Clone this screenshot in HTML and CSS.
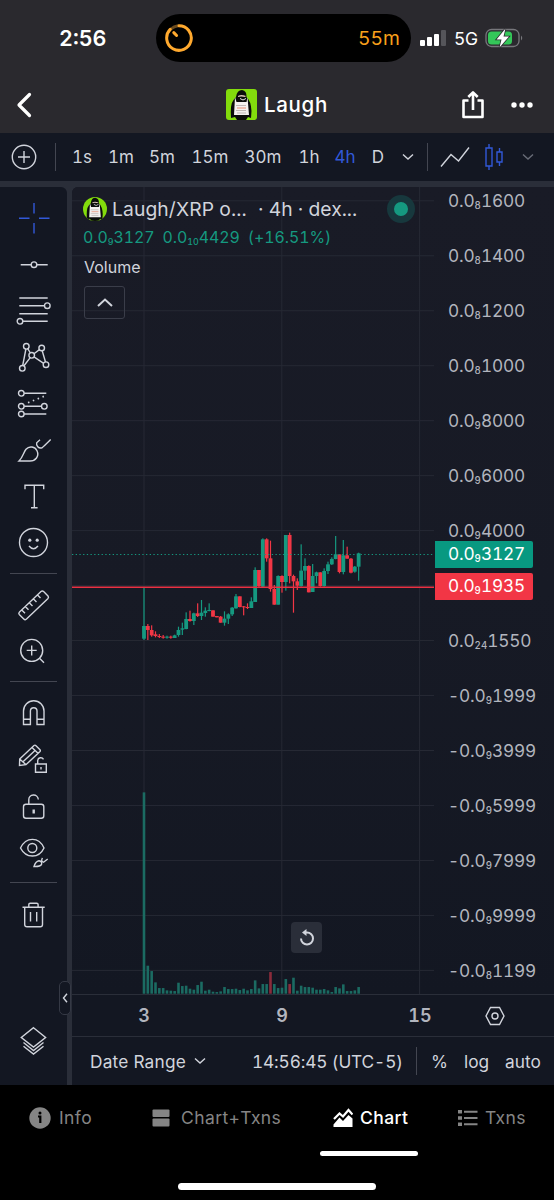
FILE: index.html
```html
<!DOCTYPE html>
<html lang="en">
<head>
  <meta charset="UTF-8" />
  <meta name="viewport" content="width=device-width, initial-scale=1.0"/>
  <title>Laugh</title>
  <link rel="stylesheet" href="styles.css">
</head>
<body>

  <svg class="defs" width="0" height="0">
    <symbol id="monkey" viewBox="0 0 31 31">
      <rect width="31" height="31" fill="#83dc0c"/>
      <path d="M10 8 Q11 1 16 1 Q21 2 20.5 8 Q25 12 25.5 22 L25 29 L22 28 L20 31 H11 L9 28 L5 29 Q4 15 7.500 11 Z" fill="#0b0d0b"/>
      <path d="M12 7 Q15 5 20 7 L19 8 Q15 7 12 8 Z" fill="#d9c1b4"/>
      <path d="M9 8 L10.500 13 H20.500 L21.500 8 L23 26 H8 Z" fill="#f4f1ef"/>
      <path d="M11 8.500 Q15 7.500 20 8.500 L19 13 H12 Z" fill="#0b0d0b"/>
      <path d="M14 9.500 L17 11 L20 9.500" stroke="#e8e8e8" fill="none"/>
      <path d="M10 16.500 H20 M10 21.500 H20 M11 24 H20" stroke="#b3aaa8" stroke-width=".8"/>
      <path d="M11 19 H20" stroke="#e58c72" stroke-width="1"/>
    </symbol>
  </svg>

  <div class="status-bar">
    <div class="time">2:56</div>
    <div class="island">
      <svg width="28" height="30" viewBox="0 0 28 30" fill="none" stroke="#ffa92e" stroke-width="3" stroke-linecap="round">
        <path d="M6 6 A12.300 12.300 0 0 1 13 2.700" stroke="#6b4a1c"/>
        <path d="M14 2.700 A12.300 12.300 0 1 1 5.200 6.400"/>
        <path d="M8.800 9.600 L11.600 12.500"/>
      </svg>
      <span>55m</span>
    </div>
    <svg class="signal" width="27" height="18" viewBox="0 0 27 18" fill="#fff">
      <rect x="0" y="11" width="5" height="6" rx="1"/>
      <rect x="7" y="8" width="5" height="9" rx="1"/>
      <rect x="14" y="5" width="5" height="12" rx="1"/>
      <rect x="21" y="1" width="5" height="16" rx="1" fill="#55555a"/>
    </svg>
    <span class="network">5G</span>
    <svg class="battery" width="40" height="22" viewBox="0 0 40 22">
      <rect x="1" y="2.500" width="33" height="17" rx="5.500" fill="none" stroke="#77777c" stroke-width="1.300"/>
      <rect x="3" y="4.500" width="24" height="13" rx="3.500" fill="#34c759"/>
      <path d="M36 8.500 Q38.500 11 36 13.500 Z" fill="#77777c"/>
      <path d="M20.500 1.500 L11.500 12.500 H16.500 L14.500 20.500 L24 9.500 H18.500 Z" fill="#fff" stroke="#2a292e" stroke-width="1.600" paint-order="stroke"/>
    </svg>
  </div>

  <div class="nav-bar">
    <svg class="back" width="18" height="28" viewBox="0 0 18 28" fill="none" stroke="#fff" stroke-width="3.200" stroke-linecap="round" stroke-linejoin="round"><path d="M14.500 3.500 L4 14 L14.500 24.500"/></svg>
    <div class="coin">
      <svg class="logo" width="31" height="31"><use href="#monkey"/></svg>
      <h1>Laugh</h1>
    </div>
    <div class="actions">
      <svg width="24" height="30" viewBox="0 0 24 30" fill="none" stroke="#fff" stroke-width="2.600" stroke-linejoin="round">
        <path d="M7.500 10.500 H2.500 V27 H21.500 V10.500 H16.500"/>
        <path d="M12 20 V3 M7.300 7 L12 2.300 L16.700 7"/>
      </svg>
      <svg width="22" height="8" viewBox="0 0 22 8" fill="#fff"><circle cx="3" cy="4" r="2.700"/><circle cx="11" cy="4" r="2.700"/><circle cx="19" cy="4" r="2.700"/></svg>
    </div>
  </div>

  <div class="toolbar">
    <svg width="26" height="26" viewBox="0 0 26 26" class="line-icon"><circle cx="13" cy="13" r="11.700"/><path d="M7 13 H19 M13 7 V19"/></svg>
    <i class="divider"></i>
    <span>1s</span>
    <span>1m</span>
    <span>5m</span>
    <span>15m</span>
    <span>30m</span>
    <span>1h</span>
    <span class="active">4h</span>
    <span>D</span>
    <svg width="12" height="8" viewBox="0 0 12 8" class="line-icon"><path d="M1 1.500 L6 6 L11 1.500"/></svg>
    <i class="divider"></i>
    <svg width="30" height="22" viewBox="0 0 30 22" class="line-icon"><path d="M1 20.500 L11 8.500 L18.500 15 L29 1.500"/></svg>
    <svg width="20" height="28" viewBox="0 0 20 28" class="line-icon blue"><path d="M2 5 H8 V23 H2 Z M5 1 V5 M5 23 V27 M13 9 H18 V19 H13 Z M15.500 5 V9 M15.500 19 V23"/></svg>
    <svg width="12" height="8" viewBox="0 0 12 8" class="line-icon dim"><path d="M1 1.500 L6 6 L11 1.500"/></svg>
  </div>

  <div class="workspace">
    <div class="tools">
      <svg class="line-icon blue" viewBox="0 0 40 40"><path d="M20 5 V15.500 M20 25 V35.500 M5 20.300 H15.500 M25 20.300 H35.500"/></svg>
      <svg class="line-icon" viewBox="0 0 40 40"><circle cx="20" cy="19.700" r="2.800"/><path d="M6.700 19.700 H17.200 M22.800 19.700 H33.700"/></svg>
      <svg class="line-icon" viewBox="0 0 40 40"><path d="M5.300 7 H33.700 M5.300 14.700 H30.500 M5.300 22.700 H33.700 M8.800 30.300 H33.700"/><circle cx="33.300" cy="14.700" r="2.800"/><circle cx="6" cy="30.300" r="2.800"/></svg>
      <svg class="line-icon" viewBox="0 0 40 40"><path d="M11.900 11 L8.700 27.500 M13.700 10.700 L16.400 15 M16.200 19.600 L9.800 28 M20 15.700 L25.400 11.600 M28.200 12.800 L31.500 24 M20 18.800 L29.700 25.300"/><circle cx="12.300" cy="8.300" r="2.800"/><circle cx="27.700" cy="10" r="2.800"/><circle cx="17.700" cy="17.300" r="2.800"/><circle cx="32" cy="26.700" r="2.800"/><circle cx="8.300" cy="30.300" r="2.800"/></svg>
      <svg class="line-icon" viewBox="0 0 40 40"><circle cx="7.300" cy="9.300" r="2.800"/><circle cx="7.300" cy="22.300" r="2.800"/><circle cx="7.300" cy="30" r="2.800"/><circle cx="30.300" cy="22.300" r="2.800"/><path d="M10.100 9.300 H32.300 M10.100 22.300 H27.500 M10.100 30 H32.300"/><path d="M14 18.700 L30 12.300" stroke-dasharray="1.500 3.700" stroke-width="1.700"/></svg>
      <svg class="line-icon" viewBox="0 0 40 40"><path d="M5 30 C9 26.300 9.500 21.300 12 18.300 C15.500 14.300 21 15.800 23 19.800 C25.500 25.300 21.500 30 16 30 Z M26 8.800 L22.700 11.800 C22 14.300 24.500 18 28 16.800 Q29 16.300 36.700 8.600"/></svg>
      <svg class="line-icon" viewBox="0 0 40 40"><path d="M11 12.300 V8.300 H29.700 V12.300 M20.300 8.300 V30.700 M17 30.700 H23.600"/></svg>
      <svg class="line-icon" viewBox="0 0 40 40"><circle cx="19.500" cy="18.500" r="14"/><path d="M15 22 Q19.500 27.500 24 22"/><g fill="#d1d4dc" stroke="none"><circle cx="15.800" cy="16.200" r="1.600"/><circle cx="23.200" cy="16.200" r="1.600"/></g></svg>
      <hr>
      <svg class="line-icon" viewBox="0 0 40 40"><path d="M27 6.500 Q28.300 5.300 29.600 6.500 L34 11 Q35 12.200 34 13.400 L12.500 34 Q11 35.300 9.800 34 L5.300 29.500 Q4.200 28.200 5.500 27 Z M23.500 10 L26.500 13 M19.500 14 L22.500 17 M15.500 18 L18.500 21 M11.500 21.700 L14.500 24.700 M8 25.200 L11 28.200"/></svg>
      <svg class="line-icon" viewBox="0 0 40 40"><circle cx="17.700" cy="18.400" r="11"/><path d="M25.500 26.200 L30 30.700 M12.700 18.400 H22.700 M17.700 13.400 V23.400"/></svg>
      <hr>
      <svg class="line-icon" viewBox="0 0 40 40"><path d="M9.500 31.500 V18 A10.200 10.200 0 0 1 30 18 V31.500 H23 V18 A3.300 3.300 0 0 0 16.400 18 V31.500 Z M9.500 26.300 H16.400 M23 26.300 H30"/></svg>
      <svg class="line-icon" viewBox="0 0 40 40"><path d="M5.700 19 L20 5.500 Q21 4.700 22 5.700 L26 9.700 Q26.700 10.600 26 11.500 L12 24.700 L5.500 25.400 Z M5.700 19 L12 24.700 M18 7.500 L24 13.300 M9 21.800 L21 10.500"/><path d="M21.500 24 H32.300 V32.300 H21.500 Z M23.700 24 V20.500 A3.100 3.100 0 0 1 29.500 19.300 M27 27 V29.500"/></svg>
      <svg class="line-icon" viewBox="0 0 40 40"><rect x="9.500" y="18.300" width="20.300" height="14" rx="2.500"/><path d="M14.800 18.300 V14 A4.700 4.700 0 0 1 24.300 13.500"/><path d="M19.700 23.500 V27.500" stroke-width="2.400"/></svg>
      <svg class="line-icon" viewBox="0 0 40 40"><path d="M6.500 15 C12 3.500 25 3.500 30 15 C25 25.700 12 25.700 6.500 15 Z"/><circle cx="18.300" cy="15" r="4.500"/><path d="M20 33.500 Q21.500 28.500 25 27.800 Q28.500 28.500 27.500 31.500 Q26 33.800 20 33.500 Z M28.500 25 Q26.500 28 29.500 29.200 L33.700 26"/></svg>
      <hr>
      <svg class="line-icon" viewBox="0 0 40 40"><path d="M8.500 13.200 H30.700 M14.800 13 V10.500 Q14.800 9.200 16.200 9.200 H22.700 Q24.100 9.200 24.100 10.500 V13 M10.700 13.200 V30.500 Q10.700 32.700 13 32.700 H26.300 Q28.500 32.700 28.500 30.500 V13.200 M16.500 18 V27.500 M22.700 18 V27.500"/></svg>
      <svg class="line-icon layers" viewBox="0 0 40 40"><path d="M19.500 6.700 L31.600 16.500 L19.500 26 L7.300 16.500 Z M9.500 21.500 L19.500 29.500 L29.500 21.500 M9.500 25.200 L19.500 33 L29.500 25.200"/></svg>
      <div class="collapse"><svg width="6" height="10" viewBox="0 0 6 10" class="line-icon"><path d="M5 .7 L1.500 5 L5 9.300"/></svg></div>
    </div>

    <div class="chart-area">
      <div class="chart">
        <div class="pane">
          <svg id="plot" width="362" height="807" viewBox="72 187 362 807"></svg>
          <div class="legend">
            <div class="symbol">
              <svg class="avatar" width="24" height="24"><use href="#monkey"/></svg>
              <span class="pair">Laugh/XRP o...</span>
              <span class="source">· 4h · dex...</span>
              <i class="live"></i>
            </div>
            <div class="quote"><span>0.0<sub>9</sub>3127</span><span>0.0<sub>10</sub>4429</span><span>(+16.51%)</span></div>
            <div class="study">Volume</div>
            <div class="fold"><svg width="18" height="11" viewBox="0 0 18 11" class="line-icon bold"><path d="M2 9 L9 2.500 L16 9"/></svg></div>
          </div>
          <div class="reset">
            <svg width="18" height="18" viewBox="0 0 18 18" fill="none" stroke="#d1d4dc" stroke-width="2"><path d="M3 9.500 A6 6 0 1 0 9 3.500 H6.500"/><path d="M8.500 0 V7 L4 3.500 Z" fill="#d1d4dc" stroke="none"/></svg>
          </div>
        </div>
        <div class="price-axis">
          <span>0.0<sub>8</sub>1600</span>
          <span>0.0<sub>8</sub>1400</span>
          <span>0.0<sub>8</sub>1200</span>
          <span>0.0<sub>8</sub>1000</span>
          <span>0.0<sub>9</sub>8000</span>
          <span>0.0<sub>9</sub>6000</span>
          <span>0.0<sub>9</sub>4000</span>
          <span></span>
          <span>0.0<sub>24</sub>1550</span>
          <span>-0.0<sub>9</sub>1999</span>
          <span>-0.0<sub>9</sub>3999</span>
          <span>-0.0<sub>9</sub>5999</span>
          <span>-0.0<sub>9</sub>7999</span>
          <span>-0.0<sub>9</sub>9999</span>
          <span>-0.0<sub>8</sub>1199</span>
          <b class="tag up">0.0<sub>9</sub>3127</b>
          <b class="tag down">0.0<sub>9</sub>1935</b>
        </div>
      </div>
      <div class="time-axis">
        <span>3</span><span>9</span><span>15</span>
        <svg width="20" height="20" viewBox="0 0 20 20" class="line-icon"><path d="M5.500 1.500 H14.500 L19 10 L14.500 18.500 H5.500 L1 10 Z"/><circle cx="10" cy="10" r="3"/></svg>
      </div>
      <div class="range-bar">
        <span class="range">Date Range</span>
        <svg width="12" height="8" viewBox="0 0 12 8" class="line-icon"><path d="M1 1.500 L6 6 L11 1.500"/></svg>
        <span class="clock">14:56:45 (UTC-5)</span>
        <i class="divider"></i>
        <span class="pct">%</span>
        <span class="log">log</span>
        <span class="auto">auto</span>
      </div>
    </div>
  </div>

  <div class="tabs">
    <div class="tab info">
      <svg width="22" height="22" viewBox="0 0 22 22"><circle cx="11" cy="11" r="10.700" fill="#858585"/><path d="M9 9.500 H11.300 V16" stroke="#000" stroke-width="2.200" fill="none"/><circle cx="11" cy="6" r="1.500"/></svg>
      <span>Info</span>
    </div>
    <div class="tab both">
      <svg width="18" height="18" viewBox="0 0 18 18" fill="#858585"><rect x=".5" y=".5" width="17" height="7.500" rx="1"/><rect x=".5" y="9.500" width="17" height="8" rx="1"/></svg>
      <span>Chart+Txns</span>
    </div>
    <div class="tab chart-tab active">
      <svg width="20" height="20" viewBox="0 0 20 20"><path d="M1 11 L6.500 5.500 L10 8.500 L15.500 2 L19.500 6.500" stroke="#fff" stroke-width="2.200" fill="none"/><path d="M.5 19 V16.500 L6.500 9.500 L10 13 L15.500 7 L19.500 10.500 V19 Z" fill="#fff"/></svg>
      <span>Chart</span>
    </div>
    <div class="tab txns">
      <svg width="20" height="18" viewBox="0 0 20 18" fill="#858585"><path d="M0 1 H4 V4.500 H0 Z M0 7.200 H4 V10.700 H0 Z M0 13.400 H4 V17 H0 Z M6 1.700 H19.500 V3.700 H6 Z M6 8 H19.500 V10 H6 Z M6 14.200 H19.500 V16.200 H6 Z"/></svg>
      <span>Txns</span>
    </div>
    <div class="home-bar"></div>
  </div>

  <script src="chart.js"></script>
</body>
</html>
```
FILE: chart.js
```js
const svg = document.getElementById("plot");
const STEP = 3.833;
const X0 = 144;

function add(tag, attrs) {
  const el = document.createElementNS("http://www.w3.org/2000/svg", tag);
  for (const k in attrs) el.setAttribute(k, attrs[k]);
  svg.appendChild(el);
}

// Grid
[144, 281.8, 419.6].forEach(x => add("line", { x1: x, x2: x, y1: 187, y2: 994, class: "grid" }));
for (let i = 0; i < 15; i++) {
  const y = 200.8 + i * 54.97;
  add("line", { x1: 72, x2: 434, y1: y, y2: y, class: "grid" });
}

// Volume: height in thirds of a pixel
const volume = [604, 84, 68, 34, 17, 17, 10, 9, 8, 33, 23, 24, 15, 12, 26, 36, 9, 12, 6, 5, 7, 20, 14, 14, 15, 11, 15, 10, 14,
  40, 16, 29, 29, 65, 29, 17, 18, 44, 29, 48, 9, 24, 20, 20, 18, 12, 12, 14, 10, 5, 20, 16, 28, 8, 8, 10, 20];
volume.forEach((v, i) => {
  const red = i === 33 || i === 38;
  add("rect", { x: X0 + i * STEP - 1.3, y: 993.7 - v / 3, width: 2.6, height: v / 3, class: red ? "vol-down" : "vol-up" });
});

// Candles: [up, body top, body bottom, wick top, wick bottom]
const candles = [
  [1, 318, 356, 203, 360], [0, 318, 330, 312, 360], [0, 330, 346, 316, 350], [0, 343, 348, 334, 352],
  [0, 348, 351, 342, 354], [0, 350, 353, 345, 356], [1, 350, 353, 347, 356], [0, 350, 353, 347, 356],
  [1, 346, 354, 344, 354], [1, 330, 345, 320, 350], [1, 325, 329, 308, 345], [1, 297, 327, 277, 328],
  [0, 297, 303, 272, 305], [1, 280, 303, 278, 315], [0, 280, 288, 250, 291], [1, 278, 288, 240, 300],
  [1, 272, 279, 262, 290], [1, 270, 273, 250, 274], [0, 271, 290, 271, 290], [0, 288, 292, 288, 292],
  [0, 290, 308, 288, 308], [1, 296, 308, 274, 317], [1, 283, 296, 280, 312], [1, 263, 283, 261, 288],
  [1, 229, 265, 222, 266], [0, 229, 261, 229, 262], [0, 259, 262, 258, 286], [0, 261, 264, 250, 267],
  [1, 244, 264, 232, 264], [1, 150, 246, 142, 246], [0, 150, 198, 150, 203], [1, 58, 200, 55, 202],
  [0, 58, 115, 55, 125], [0, 115, 207, 62, 215], [0, 207, 254, 195, 254], [1, 168, 254, 166, 254],
  [0, 168, 186, 166, 218], [1, 45, 186, 45, 212], [0, 45, 168, 38, 190], [0, 168, 184, 164, 278],
  [0, 184, 197, 175, 210], [1, 152, 198, 73, 200], [1, 138, 152, 115, 180], [0, 138, 217, 136, 217],
  [1, 168, 216, 132, 216], [1, 157, 168, 155, 190], [0, 157, 198, 157, 200], [1, 153, 198, 145, 200],
  [1, 133, 153, 125, 162], [1, 117, 133, 112, 135], [1, 103, 117, 48, 118], [0, 103, 156, 103, 160],
  [1, 106, 156, 60, 163], [0, 106, 116, 80, 116], [0, 116, 158, 114, 160], [1, 140, 155, 138, 158],
  [1, 100, 140, 98, 182]
];
candles.forEach(([up, top, bottom, high, low], i) => {
  const x = X0 + i * STEP;
  const cls = up ? "up" : "down";
  add("rect", { x: x - 0.6, y: 520 + high / 3, width: 1.2, height: (low - high) / 3, class: cls });
  add("rect", { x: x - 1.9, y: 520 + top / 3, width: 3.8, height: (bottom - top) / 3, class: cls });
});

// Price lines
add("line", { x1: 72, x2: 434, y1: 554.5, y2: 554.5, class: "last-price" });
add("line", { x1: 72, x2: 434, y1: 587.3, y2: 587.3, class: "alert-price" });
```
FILE: styles.css
```css
* {
  margin: 0;
  padding: 0;
  box-sizing: border-box;
}

body {
  width: 554px;
  height: 1200px;
  overflow: hidden;
  background: #000;
  color: #d1d4dc;
  font-family: Inter, 'Liberation Sans', sans-serif;
  font-variant-numeric: tabular-nums;
}

.defs {
  display: block;
}

svg {
  display: block;
  flex: none;
}

sub {
  position: relative;
  top: 2px;
  font-size: 0.56em;
  font-weight: 500;
  line-height: 0;
  letter-spacing: 0;
  vertical-align: baseline;
}

.line-icon {
  fill: none;
  stroke: #d1d4dc;
  stroke-width: 1.4;
  overflow: visible;
}

.line-icon.blue { stroke: #3259d8; }
.line-icon.dim { stroke: #686c77; }
.line-icon.bold { stroke-width: 2; }

.divider {
  width: 1px;
  height: 28px;
  background: #434651;
}

/* Status bar */
.status-bar {
  display: flex;
  align-items: center;
  height: 76px;
  background: #2a292e;
  color: #fff;
}

.time {
  width: 156px;
  padding-left: 59px;
  font-size: 21.5px;
  font-weight: 600;
}

.island {
  display: flex;
  align-items: center;
  justify-content: space-between;
  width: 255px;
  height: 48px;
  padding: 0 11px 0 9px;
  border-radius: 24px;
  background: #000;
  color: #f9a01b;
  font-size: 19.3px;
}

.signal { margin-left: 9px; }

.network {
  width: 31px;
  padding-left: 7px;
  font-size: 17.5px;
  letter-spacing: -0.4px;
}

.battery { margin-left: 7px; }

/* Navigation */
.nav-bar {
  display: flex;
  align-items: center;
  justify-content: space-between;
  height: 57px;
  padding: 0 21px 0 15px;
  background: #2a292e;
  color: #fff;
}

.back { margin-right: 60px; }

.coin {
  display: flex;
  align-items: center;
  gap: 7px;
}

.logo { border-radius: 3px; }

.coin h1 {
  font-size: 20.5px;
  font-weight: 500;
  letter-spacing: 0.7px;
}

.actions {
  display: flex;
  align-items: center;
  gap: 26px;
}

/* Interval toolbar */
.toolbar {
  display: grid;
  grid-template-columns: 48px 14px 40px 38px 44px 52px 54px 38px 34px 32px 28px 10px 46px 32px 36px;
  align-items: center;
  justify-items: center;
  height: 48px;
  background: #131722;
  font-size: 17px;
}

.toolbar .active { color: #3259d8; }

/* Drawing tools */
.workspace {
  display: flex;
  height: 904px;
  border-top: 6px solid #2a2e39;
  background: #2a2e39;
}

.tools {
  position: relative;
  display: flex;
  flex-direction: column;
  align-items: center;
  width: 67px;
  padding-top: 11px;
  border-top-right-radius: 6px;
  background: #131722;
}

.tools > svg {
  width: 40px;
  height: 40px;
  margin-bottom: 6.5px;
}

.tools hr {
  width: 47px;
  height: 1px;
  margin: 3px 0 11px;
  border: none;
  background: #434651;
}

.tools .layers { margin-top: 80px; }

.collapse {
  position: absolute;
  left: 59px;
  top: 794px;
  display: flex;
  align-items: center;
  justify-content: center;
  width: 12px;
  height: 34px;
  border: 1px solid #353945;
  border-radius: 5px;
  background: #131722;
}

/* Chart */
.chart-area {
  width: 482px;
  margin-left: 5px;
  border-top-left-radius: 6px;
  background: #131722;
  overflow: hidden;
}

.chart {
  display: flex;
  height: 807px;
  background: linear-gradient(#191b26, #171a25 50%, #131722);
}

.pane {
  position: relative;
  width: 362px;
}

.grid { stroke: #262934; stroke-width: 1; }
.up { fill: #159980; }
.down { fill: #f23645; }
.vol-up { fill: #1b6b62; }
.vol-down { fill: #8b2c3b; }
.last-price { stroke: #159980; stroke-width: 1.2; stroke-dasharray: 1.3 2.4; }
.alert-price { stroke: #e93142; stroke-width: 1.4; }

.legend {
  position: absolute;
  top: 7px;
  left: 11px;
  width: 336px;
}

.symbol {
  display: flex;
  align-items: center;
  height: 30px;
  font-size: 19.3px;
}

.avatar { border-radius: 50%; }

.pair {
  width: 146px;
  margin-left: 5px;
  letter-spacing: 0.1px;
  white-space: nowrap;
}

.source { white-space: nowrap; }

.live {
  width: 28px;
  height: 28px;
  margin-left: auto;
  margin-right: 4px;
  border: 7.5px solid #17383d;
  border-radius: 50%;
  background: #159980;
}

.quote {
  display: flex;
  gap: 8px;
  height: 27px;
  align-items: center;
  color: #159980;
  font-size: 15.9px;
  letter-spacing: -0.05px;
  white-space: nowrap;
}

.study {
  height: 32px;
  padding-left: 1px;
  font-size: 16px;
  line-height: 32px;
}

.fold {
  display: flex;
  align-items: center;
  justify-content: center;
  width: 41px;
  height: 33px;
  margin: 3px 0 0 1px;
  border: 1px solid #3a3d49;
  border-radius: 3px;
}

.reset {
  position: absolute;
  left: 219px;
  top: 735px;
  display: flex;
  align-items: center;
  justify-content: center;
  width: 31px;
  height: 31px;
  border-radius: 4px;
  background: #2a2e39;
}

.price-axis {
  position: relative;
  width: 120px;
  margin-top: -13px;
  color: #b2b5be;
  font-size: 17.3px;
  letter-spacing: -0.15px;
}

.price-axis span {
  display: block;
  height: 54.97px;
  padding-left: 14px;
  line-height: 54px;
}

.tag {
  position: absolute;
  left: 1px;
  width: 98px;
  height: 27px;
  padding-left: 13px;
  border-radius: 0 2px 2px 0;
  color: #fff;
  font-weight: 400;
  line-height: 26px;
}

.tag.up { top: 367px; background: #089981; }
.tag.down { top: 399px; background: #f23645; }

.time-axis {
  display: grid;
  grid-template-columns: 144px 132px 144px 6px;
  align-items: center;
  justify-items: center;
  height: 42px;
  border-top: 1px solid #2a2e39;
  color: #b2b5be;
  font-size: 18px;
  font-weight: 600;
}

.range-bar {
  display: flex;
  align-items: center;
  height: 49px;
  padding-left: 18px;
  border-top: 1px solid #2a2e39;
  font-size: 17.3px;
  white-space: nowrap;
}

.range { width: 104px; letter-spacing: 0.2px; }
.clock { width: 164px; margin-left: 46px; letter-spacing: -0.15px; }
.pct { width: 33px; margin-left: 14px; }
.log { width: 41px; }

/* Bottom tabs */
.tabs {
  position: relative;
  display: flex;
  height: 115px;
  background: #000;
  color: #858585;
}

.tab {
  position: relative;
  display: flex;
  align-items: center;
  height: 71px;
  padding-bottom: 6px;
  font-size: 17.5px;
  letter-spacing: 0.4px;
}

.info { width: 123px; padding-left: 29px; gap: 8px; }
.both { width: 197px; padding-left: 29px; gap: 11px; }
.chart-tab { width: 98px; padding-left: 13px; gap: 7px; }
.txns { padding-left: 40px; gap: 7px; }

.tab.active {
  color: #fff;
  font-weight: 500;
}

.tab.active::after {
  content: '';
  position: absolute;
  left: 0;
  right: 0;
  bottom: 0;
  height: 5px;
  border-radius: 3px;
  background: #fff;
}

.home-bar {
  position: absolute;
  left: 178px;
  bottom: 10px;
  width: 198px;
  height: 7px;
  border-radius: 4px;
  background: #fff;
}
```
